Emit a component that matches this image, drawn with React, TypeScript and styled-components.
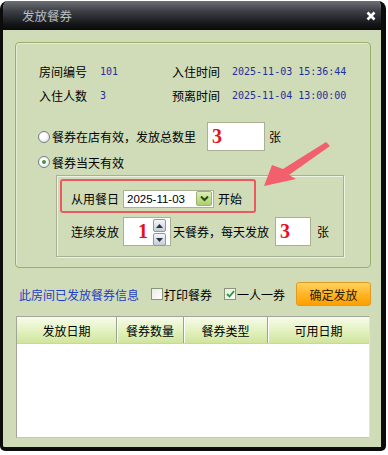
import React from "react";
import styled, { createGlobalStyle } from "styled-components";

const Global = createGlobalStyle`
  html, body { margin: 0; padding: 0; background: #ffffff; }
  body {
    font-family: "Noto Sans CJK SC", "Noto Sans", sans-serif;
    font-size: 12px;
    color: #000;
  }
`;

const Window = styled.div`
  box-sizing: border-box;
  position: relative;
  width: 386px;
  height: 450px;
  margin-top: 1px;
  border: 3px solid #0c0c0c;
  border-top: 0;
  border-right-width: 5px;
  border-bottom-width: 4px;
  border-radius: 8px 8px 5px 5px;
  background: #d0dcb8;
  display: flex;
  flex-direction: column;
  overflow: hidden;
`;

const TitleBar = styled.div`
  height: 29px;
  flex: none;
  display: flex;
  align-items: center;
  justify-content: space-between;
  padding: 0 5px 0 19px;
  background: linear-gradient(#6c7076 0%, #3c4045 35%, #141517 80%, #0a0a0b 100%);
`;

const Title = styled.span`
  color: #b9bdc1;
  font-size: 12.5px;
  line-height: 29px;
`;

const Body = styled.div`
  flex: 1;
  padding: 12px 0 0 12px;
  display: flex;
  flex-direction: column;
`;

const Group = styled.div`
  box-sizing: border-box;
  width: 356px;
  height: 226px;
  border: 1px solid #9cae6e;
  border-radius: 4px;
  box-shadow: inset 1px 1px 0 #e4ecd2;
  padding: 17px 0 0 22px;
  display: flex;
  flex-direction: column;
`;

const InfoGrid = styled.div`
  display: grid;
  grid-template-columns: 61px 72px 60px auto;
  grid-auto-rows: 24px;
  margin-left: 1px;
  align-items: center;
`;

const Label = styled.span`
  font-size: 12px;
  line-height: 24px;
`;

const Value = styled.span`
  font-family: "DejaVu Sans Mono", "Liberation Mono", monospace;
  font-size: 10px;
  color: #1f2f9e;
  line-height: 24px;
`;

const OptionRow = styled.div<{ $h: number; $mt: number }>`
  display: flex;
  align-items: center;
  height: ${(p) => p.$h}px;
  margin-top: ${(p) => p.$mt}px;
`;

const Radio = styled.span<{ $on?: boolean }>`
  box-sizing: border-box;
  width: 12px;
  height: 12px;
  border-radius: 50%;
  border: 1px solid #6f7f86;
  background: radial-gradient(circle at 40% 40%, #ffffff 30%, #d8dcd8 100%);
  margin-right: 2px;
  display: flex;
  align-items: center;
  justify-content: center;
  &::after {
    content: "";
    display: ${(p) => (p.$on ? "block" : "none")};
    width: 4px;
    height: 4px;
    border-radius: 50%;
    background: #3f9a3f;
  }
`;

const Text = styled.span<{ $ml?: number }>`
  font-size: 12px;
  white-space: nowrap;
  margin-left: ${(p) => p.$ml ?? 0}px;
`;

const NumBox = styled.div<{ $w: number; $pl: number }>`
  box-sizing: border-box;
  width: ${(p) => p.$w}px;
  height: 29px;
  background: #fff;
  border: 1px solid #a9b192;
  padding-left: ${(p) => p.$pl}px;
  display: flex;
  align-items: center;
  font-family: "Liberation Serif", "DejaVu Serif", serif;
  font-weight: bold;
  font-size: 20px;
  color: #e3141c;
  position: relative;
`;

const InnerBox = styled.div`
  box-sizing: border-box;
  width: 288px;
  height: 82px;
  margin: 5px 0 0 18px;
  border: 1px solid #a8ae98;
  box-shadow: 1px 1px 0 #eef2e4, inset 1px 1px 0 #eef2e4;
  padding: 3px 0 0 3px;
  display: flex;
  flex-direction: column;
`;

const Highlight = styled.div`
  box-sizing: border-box;
  width: 196px;
  height: 34px;
  border: 2px solid #ec5a60;
  border-radius: 3px;
  padding: 5px 0 0 9px;
  display: flex;
  align-items: center;
`;

const DateBox = styled.div`
  box-sizing: border-box;
  width: 91px;
  height: 18px;
  margin-left: 4px;
  background: #fff;
  border: 1px solid #a9b192;
  display: flex;
  align-items: center;
  justify-content: space-between;
  padding: 0 1px 0 3px;
  font-family: "Liberation Sans", Arial, sans-serif;
  font-size: 11.5px;
`;

const DropBtn = styled.span`
  box-sizing: border-box;
  width: 16px;
  height: 15px;
  border: 1px solid #9bb56c;
  border-radius: 2px;
  background: linear-gradient(#dcefb8, #a9d06a);
  display: flex;
  align-items: center;
  justify-content: center;
`;

const SpinRow = styled.div`
  display: flex;
  align-items: center;
  margin-top: 4px;
  padding-left: 11px;
`;

const SpinBtns = styled.div`
  position: absolute;
  right: 4px;
  top: 1px;
  display: flex;
  flex-direction: column;
  gap: 1px;
`;

const SpinBtn = styled.span`
  box-sizing: border-box;
  width: 13px;
  height: 13px;
  border: 1px solid #8e98a4;
  border-radius: 2px;
  background: linear-gradient(#f4f6fa, #c6ccd6);
  display: flex;
  align-items: center;
  justify-content: center;
`;

const BottomRow = styled.div`
  display: flex;
  align-items: center;
  height: 24px;
  margin-top: 14px;
  padding-left: 4px;
`;

const LinkText = styled.span`
  color: #1e3cc6;
  font-size: 12px;
  white-space: nowrap;
  margin-right: 12px;
`;

const Check = styled.span<{ $on?: boolean }>`
  box-sizing: border-box;
  width: 12px;
  height: 12px;
  border: 1px solid #869676;
  background: linear-gradient(135deg, #e8ece4, #ffffff);
  display: flex;
  align-items: center;
  justify-content: center;
`;

const CheckLabel = styled.span`
  font-size: 12px;
  margin: 0 12px 0 1px;
  white-space: nowrap;
`;

const OkButton = styled.button`
  box-sizing: border-box;
  width: 75px;
  height: 24px;
  margin-left: -1px;
  border: 1px solid #e39a22;
  border-radius: 3px;
  background: linear-gradient(#ffd35e 0%, #ffb628 50%, #ff9f00 100%);
  color: #2a1a00;
  font-family: "Noto Sans CJK SC", sans-serif;
  font-size: 12px;
  padding: 0;
`;

const Table = styled.div`
  box-sizing: border-box;
  width: 354px;
  height: 122px;
  margin: 10px 0 0 1px;
  background: #fff;
  border: 1px solid #a2a69a;
  border-right-color: #dfe4d6;
  border-bottom-color: #c4c9ba;
  display: flex;
  flex-direction: column;
`;

const HeaderRow = styled.div`
  display: grid;
  grid-template-columns: 100px 67px 84px 1fr;
  height: 26px;
  background: linear-gradient(#f6fbe8 0%, #e4f2c2 50%, #cfe59c 100%);
  border-bottom: 1px solid #c9d6a8;
`;

const HeaderCell = styled.div<{ $last?: boolean }>`
  display: flex;
  align-items: center;
  justify-content: center;
  font-size: 12px;
  border-right: ${(p) => (p.$last ? "none" : "1px solid #9ea294")};
  box-shadow: ${(p) => (p.$last ? "none" : "1px 0 0 #ffffff")};
`;

const Arrow = styled.svg`
  position: absolute;
  left: 257px;
  top: 137px;
`;

const Chevron = () => (
  <svg width="9" height="7" viewBox="0 0 9 7">
    <path d="M1 1.5 L4.5 5 L8 1.5" fill="none" stroke="#2e4a12" strokeWidth="2" />
  </svg>
);

const Tri = ({ up }: { up?: boolean }) => (
  <svg width="7" height="4" viewBox="0 0 7 4">
    <path d={up ? "M0 4 L3.5 0 L7 4 Z" : "M0 0 L3.5 4 L7 0 Z"} fill="#2a3240" />
  </svg>
);

const Tick = () => (
  <svg width="9" height="8" viewBox="0 0 9 8">
    <path d="M1 4 L3.5 6.5 L8 1.2" fill="none" stroke="#2a9a2e" strokeWidth="1.8" />
  </svg>
);

export default function App() {
  return (
    <>
      <Global />
      <Window>
        <TitleBar>
          <Title>发放餐券</Title>
          <svg width="10" height="10" viewBox="0 0 10 10">
            <path d="M1.5 1.5 L8.5 8.5 M8.5 1.5 L1.5 8.5" stroke="#ffffff" strokeWidth="2.6" />
          </svg>
        </TitleBar>
        <Body>
          <Group>
            <InfoGrid>
              <Label>房间编号</Label>
              <Value>101</Value>
              <Label>入住时间</Label>
              <Value>2025-11-03 15:36:44</Value>
              <Label>入住人数</Label>
              <Value>3</Value>
              <Label>预离时间</Label>
              <Value>2025-11-04 13:00:00</Value>
            </InfoGrid>
            <OptionRow $h={29} $mt={14}>
              <Radio />
              <Text>餐券在店有效，发放总数里</Text>
              <Text $ml={11}>
                <NumBox $w={58} $pl={4}>3</NumBox>
              </Text>
              <Text $ml={4}>张</Text>
            </OptionRow>
            <OptionRow $h={16} $mt={3}>
              <Radio $on />
              <Text>餐券当天有效</Text>
            </OptionRow>
            <InnerBox>
              <Highlight>
                <Text>从用餐日</Text>
                <DateBox>
                  <span>2025-11-03</span>
                  <DropBtn>
                    <Chevron />
                  </DropBtn>
                </DateBox>
                <Text $ml={4}>开始</Text>
              </Highlight>
              <SpinRow>
                <Text>连续发放</Text>
                <Text $ml={4}>
                  <NumBox $w={48} $pl={14}>
                    1
                    <SpinBtns>
                      <SpinBtn>
                        <Tri up />
                      </SpinBtn>
                      <SpinBtn>
                        <Tri />
                      </SpinBtn>
                    </SpinBtns>
                  </NumBox>
                </Text>
                <Text $ml={2}>天餐券，每天发放</Text>
                <Text $ml={6}>
                  <NumBox $w={36} $pl={4}>3</NumBox>
                </Text>
                <Text $ml={6}>张</Text>
              </SpinRow>
            </InnerBox>
          </Group>
          <BottomRow>
            <LinkText>此房间已发放餐券信息</LinkText>
            <Check />
            <CheckLabel>打印餐券</CheckLabel>
            <Check $on>
              <Tick />
            </Check>
            <CheckLabel>一人一券</CheckLabel>
            <OkButton>确定发放</OkButton>
          </BottomRow>
          <Table>
            <HeaderRow>
              <HeaderCell>发放日期</HeaderCell>
              <HeaderCell>餐券数量</HeaderCell>
              <HeaderCell>餐券类型</HeaderCell>
              <HeaderCell $last>可用日期</HeaderCell>
            </HeaderRow>
          </Table>
        </Body>
        <Arrow width="76" height="52" viewBox="0 0 76 52">
          <polygon
            points="4,48 12,27 23,31 66,4 70,8 29,37 36,41"
            fill="#f2606e"
          />
        </Arrow>
      </Window>
    </>
  );
}
